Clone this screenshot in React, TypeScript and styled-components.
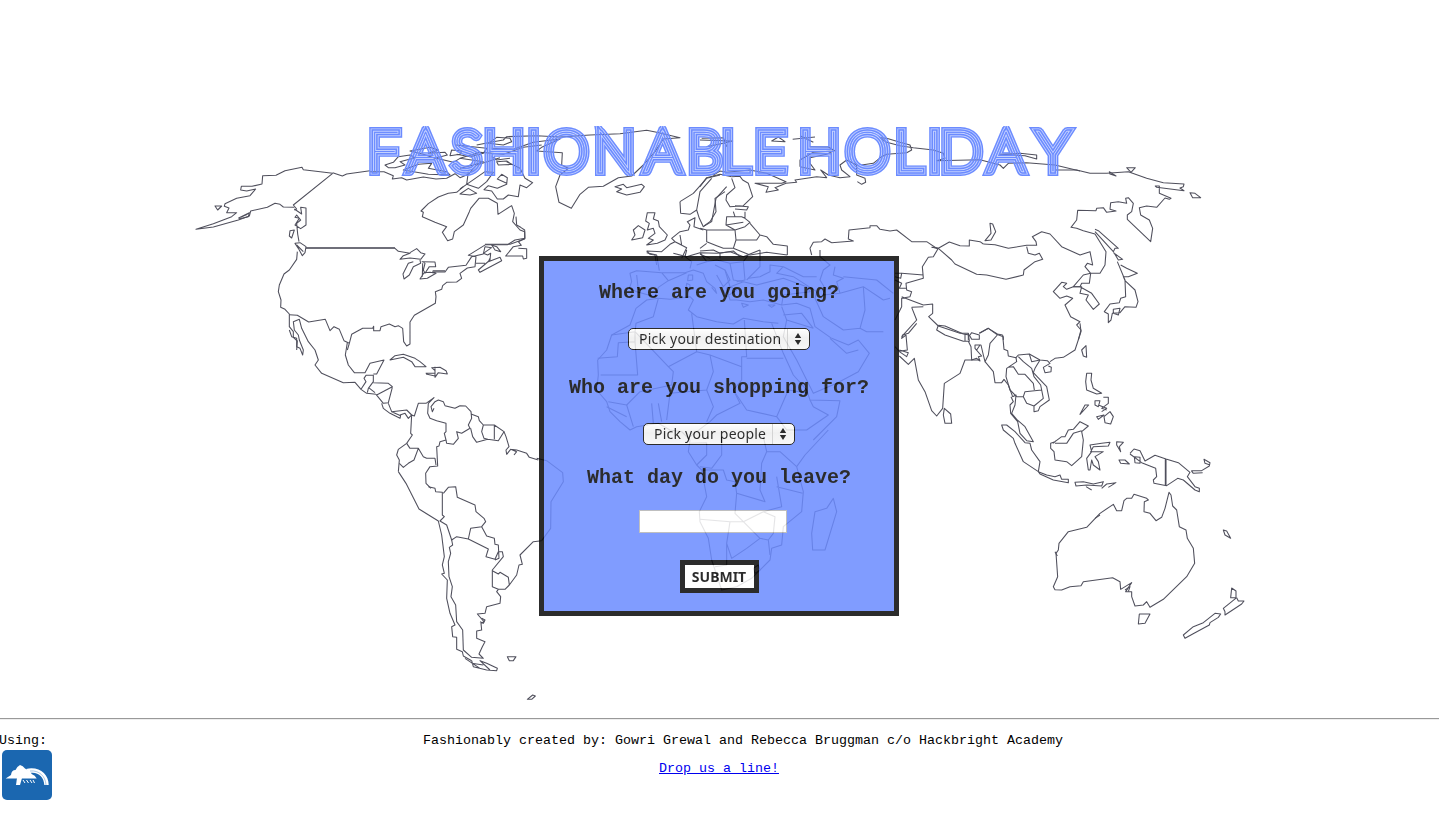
import React from "react";
import styled, { createGlobalStyle } from "styled-components";

const GlobalStyle = createGlobalStyle`
  body { margin: 0; background: #fff; }
`;

const mono = `"Courier New", "Liberation Mono", monospace`;
const ui = `"Lucida Grande", "Noto Sans", sans-serif`;

const Page = styled.div`
  height: 828px;
  display: flex;
  flex-direction: column;
  overflow: hidden;
  background: #fff;
  color: #000;
  font-family: ${mono};
`;

const Stage = styled.main`
  display: grid;
  height: 718px;
  grid-template-columns: 1439px;
  justify-content: center;
`;

const MapArt = styled.svg`
  grid-area: 1 / 1;
  fill: none;
  stroke: #333342;
  stroke-width: 3.2;
  stroke-linejoin: round;
  opacity: 0.86;
`;

const Content = styled.div`
  grid-area: 1 / 1;
  z-index: 1;
  display: flex;
  flex-direction: column;
  align-items: center;
`;

const Heading = styled.h1`
  margin: 116px 0 70px;
  height: 70px;
  width: 1439px;
  font-weight: 100;
  line-height: 0;
`;

const WordMark = styled.svg`
  display: block;
  font-family: Lato, sans-serif;
  font-size: 56px;
  font-weight: 100;
  text-anchor: middle;
  stroke-miterlimit: 6;
`;

const Form = styled.form`
  box-sizing: border-box;
  width: 360px;
  height: 360px;
  margin-right: 1px;
  border: 5px solid #080808;
  background: #6b8bff;
  opacity: 0.85;
  display: flex;
  flex-direction: column;
  align-items: center;
  color: #080808;
`;

const Question = styled.label<{ $top: number }>`
  margin-top: ${(p) => p.$top}px;
  height: 24px;
  font-size: 20px;
  font-weight: bold;
  line-height: 24px;
  white-space: pre;
`;

const Picker = styled.button<{ $width: number }>`
  box-sizing: border-box;
  margin-top: 23px;
  width: ${(p) => p.$width}px;
  height: 22px;
  padding: 0 0 0 10px;
  display: flex;
  align-items: center;
  border: 1px solid #080808;
  border-radius: 5px;
  background: linear-gradient(#fff, #eee 45%, #f7f7f7);
  color: #080808;
  font: 14px/20px ${ui};
  letter-spacing: 0.22px;
  white-space: nowrap;
`;

const PickerText = styled.span`
  flex: 1;
  text-align: left;
`;

const Arrows = styled.svg`
  width: 21px;
  height: 20px;
  border-left: 1px solid #ccc;
`;

const DateField = styled.input`
  box-sizing: border-box;
  width: 148px;
  height: 23px;
  margin: 20px 12px 0 0;
  border: 1px solid #b5b5b5;
  background: #fff;
  padding: 0;
`;

const Submit = styled.button`
  box-sizing: border-box;
  width: 79px;
  height: 33px;
  margin-top: 27px;
  padding: 0;
  border: 5px solid #080808;
  background: #fff;
  color: #080808;
  font: bold 14px/22px ${ui};
`;

const Footer = styled.footer`
  border-top: 1px solid #999;
  box-shadow: inset 0 1px #eee;
  height: 109px;
  display: grid;
  grid-template-columns: 60px 1fr 60px;
  font-size: 13.333px;
  line-height: 16px;
`;

const Using = styled.div`
  padding-top: 14px;
  margin-left: -1px;
`;

const Badge = styled.svg`
  display: block;
  width: 50px;
  height: 50px;
  margin: 1px 0 0 3px;
`;

const Credits = styled.div`
  display: flex;
  flex-direction: column;
  align-items: center;
  gap: 12px;
  padding-top: 14px;
`;

const Credit = styled.span`
  padding-left: 47px;
`;

const MailLink = styled.a`
  margin-right: 1px;
  color: #0000ee;
`;

type Region = { name: string; x: number; y: number; d: string[] };

/* Outlines are plotted three units to the pixel, region by region. */
const regions: Region[] = [
  {
    name: "north-america",
    x: 180,
    y: 110,
    d: [
      "M458 190L408 184L370 179L366 172L315 182L288 196L248 197L246 222L216 229L184 229L182 240L200 243L227 237L210 257L170 265L135 281L133 289L147 294L140 308L170 308L155 320L100 341L48 358L100 351L175 330L208 318L212 303L262 292L285 280L300 283L310 291L343 292",
      "M458 188L487 198L500 192L570 182",
      "M458 190L340 285L350 297L343 300",
      "M176 324L208 308L205 320L180 326ZM182 322L204 312M105 288L125 288L113 300Z",
      "M343 297L365 312L362 292L378 294L378 345L362 356L345 345L358 325L345 322L350 315L362 330L350 340L353 372L357 395M330 362L343 360L335 384L328 378Z",
      "M345 400L360 398L378 410L375 428L367 437L355 415ZM350 405L370 425",
      "M378 415L645 415L655 424L690 430L670 437L660 448L690 444L722 448L735 432L722 428L710 416L690 428",
      "M378 413L645 413M352 425L350 448L328 480L312 492L298 525L295 545L303 570L302 592L315 598L328 612L328 650L340 665L340 682L352 693L350 720",
      "M328 614L352 616L386 636L436 628L450 662L462 650L478 658L492 692L508 700L502 720M508 700L515 673L548 655L578 655L581 649L581 662L600 662L603 650L628 642L645 650L655 647L668 655L671 695L680 708L690 702L690 636L703 616L766 580L768 560L766 545L785 538L788 527L800 517L830 516L845 505L840 490L862 474L885 470L888 440L865 436L917 404L983 404L1005 390L1035 385L1034 360L1022 352L1010 345L1008 320",
      "M700 455L685 460L669 492L672 507L688 495L700 470L722 460L720 450M725 455L765 456L767 470L748 470L735 490L730 480L735 460L728 455M728 460L727 500M720 507L732 488L750 487L768 490L742 505ZM756 486L795 486L805 472L858 466L875 440L910 432L915 410M758 482L795 482",
      "M915 410L935 413L910 430L923 435L932 430L930 450L895 480L900 487L965 452L960 442L925 455L930 445M888 460L915 460M935 405L950 410L962 425L945 420ZM1035 385L1015 395L1024 406L1000 410L977 438L1028 438L1030 447L1040 445L1040 416L1015 415",
    ],
  },
  {
    name: "arctic-and-atlantic",
    x: 360,
    y: 115,
    d: [
      "M30 170L72 170L100 182L97 192L125 188L140 195L190 186L228 192L260 190L285 176L300 188L325 178L350 150L420 128",
      "M75 150L100 142L115 125L150 120L165 128L120 140L135 150L105 158L85 158ZM150 108L210 97L235 105L205 115L255 112L262 120L225 130L190 118ZM130 165L175 148L215 145L205 160L260 170L270 180L205 178Z",
      "M275 105L305 108L300 118L270 122ZM288 90L380 100L370 115L330 125L290 118M300 130L370 140L340 150L300 160M230 130L280 142L300 130L360 112L430 118L490 97L545 90",
      "M385 85L410 67L450 70L455 80L430 90ZM350 90L400 80L430 75L440 65L530 62L600 66L690 60L780 56L860 46L890 52L960 68L910 72L885 110L850 150L815 183L775 188L730 214L685 217L660 238L634 280L597 262L587 215L600 180L625 160L605 150L607 113L530 108L545 97L600 72L520 82L460 103L395 100",
      "M440 140L480 160L495 190L518 203L500 218L480 210L475 245L445 240L430 252L412 252L395 228L372 224L385 212L412 220L440 208L442 188L425 178L412 192L440 205M410 140L440 138L455 148L415 150ZM395 125L410 135L450 130",
      "M300 222L320 208L375 170L400 172L380 200L355 220L320 208M300 237L325 220L350 235L330 240ZM325 170L320 208",
      "M310 215L290 232L265 235L235 246L205 266L183 288L190 292L187 305L225 322L260 335L247 352L263 377L278 372L283 350L310 330L328 290L332 280L357 250L385 250L412 265L414 298L455 272L463 295L458 320L480 345L494 350L494 372L450 388L375 388",
      "M765 215L790 208L800 218L845 208L853 215L840 232L800 240L770 230L785 222Z",
      "M862 293L885 293L880 312L895 318L898 335L922 360L915 375L892 385L860 390L880 375L865 370L885 355L880 340L862 345L868 325L857 318ZM820 345L835 332L855 345L848 368L815 375L825 360Z",
      "M860 408L905 410L930 388L945 380L935 370L960 350L985 345L990 330L982 320L1005 308L1002 335L1030 345M945 380L965 390L960 360M945 380L980 398L965 430M860 408L870 418L885 420L890 450",
      "M960 260L1000 235L1040 190L1080 180M960 260L962 295L990 298L1010 285L1018 310L1030 335L1055 320L1068 250L1100 215M1010 285L1020 230L1055 190",
    ],
  },
  {
    name: "europe-and-siberia",
    x: 700,
    y: 115,
    d: [
      "M95 185L120 184L128 195L145 205L158 245L130 272L90 275L78 255L80 240L105 218L95 190M75 230L45 250L48 290L30 320L12 333M78 255L80 240M105 272L145 275L140 285L105 282",
      "M0 215L20 188L60 178L95 185M40 180L60 168L80 172L150 165L200 175L258 200L245 205L165 205L205 215L198 232L235 225L225 218L258 205L290 202L285 195L350 185L380 188L362 165L385 180L420 188L450 185L425 165L420 150L440 135L470 150L470 180L495 190L497 202L485 208L472 200",
      "M300 155L300 135L340 112L400 108L380 118L330 128L330 145L345 165L300 155M330 95L385 96L405 108M215 78L235 66L255 80ZM278 73L345 66M300 62L340 82M0 75L98 78L70 85L20 95M5 70L70 68L80 95",
      "M485 150L520 145L545 125L560 118L620 113L635 105L630 90L600 82L560 70L540 68L560 82L600 92L640 98L700 105L730 115L735 130L710 137L840 134L900 150L910 160L925 145L980 143L1065 150L1140 168M900 118L960 115L1010 120L1010 132L975 122Z",
      "M395 383L460 378L445 372L447 345L510 338L510 332L530 332L540 343L570 348L590 345L635 380L680 380L713 402M395 383L375 372L365 380L340 382L330 400L335 420",
      "M105 345L135 335L150 322L135 310L125 305L80 305L78 330L105 345L108 375L170 375L180 360L150 325M100 290L105 305M135 290L135 308M180 360L200 365L220 388L262 393L262 420M0 340L20 345L70 345L105 345M20 345L20 380L50 392L70 400L100 400L108 375M0 400L20 385M0 408L40 405L60 415L60 430M60 415L100 408L120 425M78 330L130 322M0 418L30 430M100 400L150 420L200 412L262 420",
    ],
  },
  {
    name: "east-asia",
    x: 880,
    y: 120,
    d: [
      "M525 150L590 150L630 160L680 160L745 155L800 175L850 188L912 192L910 200L900 204L912 212L830 202L826 198L838 198L838 220L873 235L868 238L855 234L830 262L800 258L778 263L782 285L808 300L818 325L812 365L742 298L742 285L755 275L760 250L745 233L737 235L740 250L715 245L692 248L690 268L708 273L680 277L670 263L650 265L648 272L593 271L590 300L573 322L590 325L610 332L645 342L678 395L675 435L660 460L632 460",
      "M740 143L766 143L753 157ZM688 155L708 168L690 162ZM930 218L945 220L962 233L938 233Z",
      "M310 372L345 374L385 385L440 376L470 376L468 365L457 350L485 335L510 342L545 380L600 405L630 395L638 435L622 430L615 440L632 460L628 490L605 490L600 500L580 500L610 465L632 460M440 380L445 400L465 405L478 400L488 418L465 425L432 450L430 465L378 478L320 465L290 463L225 432L215 420L175 385L155 382",
      "M155 382L175 385L208 366L240 377L268 378L268 360L300 365L310 372M330 310L338 312L347 335L333 360L315 362L333 340ZM175 385L160 410L145 412L127 440L130 475L78 490L80 510L95 515L90 530L65 535L65 560L45 600M65 460L130 465M65 530L90 540L130 555L158 552L158 580L146 590L175 618L240 640L265 640L265 660M95 562L110 600L65 650M95 562L130 560",
      "M645 328L655 332L715 385L705 385L700 395L645 335M700 398L728 418L715 420L702 398M712 425L735 480L737 530L722 535L718 548L690 552L673 575L685 582L685 608L693 600L697 580L720 578L735 560L768 562L774 545L765 510L735 482L730 470L745 470L772 460L740 445L722 435M700 568L720 565L715 585L700 580Z",
      "M580 500L605 500L600 520L625 525L618 540L640 568L658 552L635 520L600 500M580 500L560 508L550 500L560 490L545 487L520 515L540 535L560 528L578 535L555 555L572 590L600 605L590 615L603 630L595 660M298 640L325 625L350 643L370 650L370 660",
      "M45 460L65 460L62 475L45 470M45 480L65 490L58 505L80 505",
    ],
  },
  {
    name: "south-east-asia",
    x: 880,
    y: 280,
    d: [
      "M175 136L170 150L195 165L250 184L268 184L265 160M175 136L195 138L250 162L268 165L275 178L298 178L298 165L275 158L270 165M255 162L255 182M298 160L325 145L352 162L368 165M265 184L273 200L275 240L290 235L300 243L295 230L305 228L285 205L285 195L303 195L310 225L315 245L325 225L330 190L352 165M300 195L290 210",
      "M368 165L372 208L383 212L385 228L408 233L415 225L448 222L480 240L502 242L510 250L490 262L495 278L513 275L514 262L505 258M510 245L525 235L550 232L585 210L603 155L600 130M605 210L618 197L620 232L610 228Z",
      "M58 215L80 230L85 218L58 210M45 200L58 214L82 210L78 165L65 175L68 165L85 160L110 130M58 228L85 253L103 235L115 300L135 335L155 392L170 408L188 385L193 310L240 280L255 240L300 240M193 385L212 402L215 430L195 430L190 405Z",
      "M315 245L340 275L345 308L365 308L372 298L385 315L398 350L408 345L405 375L395 400L410 418L435 440L460 485L440 482L420 460L413 425L392 400L390 375L400 365L393 350",
      "M408 233L410 245L380 265L378 290L390 330L410 350L430 350L440 370L462 378L490 355L485 330L435 335L430 350M385 262L400 260L415 283L435 283L460 310L463 330M415 230L430 245L455 265L462 290L482 315L485 330M480 240L465 265L460 278L500 320L508 360L480 380L475 392L462 395L462 378M448 222L455 245L480 240",
      "M365 435L380 435L405 455L435 488L450 490L455 510L480 545L475 575L430 545L405 490L400 475L370 450ZM475 575L500 585L525 590L540 585L545 598L565 598L565 608L520 600L480 582Z",
      "M620 280L635 280L633 300L640 325L665 340L650 342L620 330L617 305ZM600 403L615 375L626 375ZM645 362L660 362L655 380L645 375ZM670 352L685 352L685 370L665 385L680 390M650 410L672 405L655 418ZM690 395L700 410L692 432L675 428L672 410ZM655 375L680 385L665 395",
      "M512 490L525 485L545 470L555 470L565 450L580 448L600 425L625 438L605 455L610 480L605 530L575 557L560 545L525 540L522 515L512 505ZM525 490L560 490L580 460L605 452M520 490L528 482",
      "M630 495L665 490L690 487L685 498L640 500L632 515L670 515L645 530L655 545L660 570L640 555L635 540L630 570L625 570L620 535L635 515ZM710 485L730 487L718 500L722 515L710 495ZM717 540L735 540L748 552L722 550Z",
      "M585 607L610 605L640 612L670 605L665 618L620 615L588 618ZM665 625L680 612L708 608L685 622M618 620L635 630",
    ],
  },
  {
    name: "oceania",
    x: 980,
    y: 430,
    d: [
      "M450 70L462 57L480 62L495 93L525 76L558 87L595 98L630 127L622 140L645 170L658 175L658 185L645 180L610 150L593 145L560 167L522 160L520 150L530 140L527 115L485 98L450 72M463 80L480 82L480 100L465 98ZM558 87L558 167M556 87L556 167M634 122L665 122L688 108L690 98L672 88L675 100L688 104M634 122L640 130L668 128",
      "M567 187L573 195L578 228L590 240L598 290L618 300L622 325L640 355L644 400L620 440L550 508L510 532L500 515L490 525L465 528L455 500L455 485L437 485L455 458L422 478L420 455L398 443L310 455L303 467L270 470L245 480L225 479L220 470L233 440L228 370L235 360L237 340L265 305L320 292L360 250L400 223L410 242L425 242L432 212L440 205L455 205L462 193L500 205L505 210L493 215L492 245L510 250L528 272L545 262L555 235Z",
      "M225 365L232 378M345 265L360 255M435 480L450 470L445 485M478 552L510 552L495 580L475 582ZM730 300L740 303L752 325L735 315Z",
      "M755 474L768 483L768 503L752 503ZM770 503L775 513L792 513L785 522L735 555L735 545L730 535L770 503M610 615L640 590L670 578L705 550L722 552L715 562L690 578L688 585L645 608L615 625Z",
    ],
  },
  {
    name: "central-america",
    x: 260,
    y: 300,
    d: [
      "M88 90L95 110L110 115L110 140L120 145L128 165L130 150L118 120L115 105L103 90L100 65L118 58L125 85L145 125L165 150L175 180L165 195L185 220L250 248L285 247L303 268L320 280L348 283",
      "M262 128L256 165L265 195L283 218L315 218L330 190L372 180L350 222L340 222M303 268L318 245L312 235L318 226L340 226L340 245L325 265L322 278M340 248L385 250L397 260L350 285M325 262L345 278M348 283L370 310L385 308L397 262M365 310L370 325L390 340L420 355L422 347L395 335L385 310M395 335L440 330L455 345L445 355L435 340L420 345",
      "M390 180L405 167L430 163L465 175L480 185L498 200L465 200L455 185L430 172ZM497 220L525 220L525 228L498 222M525 200L525 232L535 218L562 222L558 212L540 202L515 203L525 212",
      "M455 345L463 348L475 310L498 310L522 293L505 310L503 340L510 355L530 362L558 370L558 395L553 400L558 420L540 425L537 438L530 440L533 498L510 500L497 520L498 550L513 565M455 345L452 400L457 405L440 430L415 448L410 465L418 480L415 515",
      "M522 325L517 335L513 320L525 305L535 300L550 305L555 317L585 325L600 317L617 318L633 335L635 355L625 375L630 385L605 400L590 395L595 415L580 433L560 430L558 420M633 342L655 350L658 362L670 375L665 395L672 415L683 418L650 427L638 410L632 385M670 375L703 375L732 395L715 422L683 418M703 375L703 418M732 395L738 410L747 440L738 450L740 463L752 448L770 455L762 465M752 448L770 450L800 460L808 472L835 480",
      "M440 430L450 445L475 445L462 480L445 490L430 502L418 490M475 445L490 470L500 475L525 475L528 495",
    ],
  },
  {
    name: "south-america",
    x: 380,
    y: 450,
    d: [
      "M55 65L78 100L117 177L175 213L185 255L193 320L187 345L193 370L185 372L202 390L200 445L210 490L225 525L215 530L218 560L230 562L230 598L247 605L250 618L275 632M145 110L165 115L167 125L187 127L187 195L193 200L180 213L200 225L215 270L230 260L265 267L272 235L305 230L317 215L312 205L288 185L285 165L232 142L227 110L205 112L190 130",
      "M215 270L218 285L208 292L212 310L205 335L207 380L217 410L213 440L227 465L230 515L248 540L250 600L275 622L310 625L297 612L307 590L315 575L290 565L290 543L305 540L303 520L312 515L292 492L315 490L320 470L360 460L362 440L350 425L355 418L337 410L337 360L370 320L367 305L355 305L345 328L318 320L325 297L265 267M305 230L320 258L343 265L345 283L355 285L357 325L345 330",
      "M337 362L355 372L360 367L385 382L388 405L375 418L355 418M388 405L410 375L417 345L427 343L420 315L460 275L485 272M275 632L280 650L320 660L350 662L352 655L320 640L300 632L330 660M275 640L310 645M255 625L300 655M382 620L408 620L400 632H388Z",
      "M442 748L458 735L466 738L455 748ZM305 505L315 510L310 520L300 515",
      "M470 25L500 32L548 68L550 95L513 155L512 235L485 272",
    ],
  },
  {
    name: "mediterranean-and-africa",
    x: 530,
    y: 250,
    d: [
      "M300 70L320 62L395 68L415 92L385 112L375 140L320 125L298 115L305 95ZM320 75L325 120M395 68L465 68L490 60L520 70L530 95L555 115L560 130L545 112M415 92L470 68",
      "M350 8L380 15L388 62M470 0L465 20L485 35L480 55M430 10L470 20L510 8L560 10L600 5L640 20L690 0M510 8L530 35L500 45M530 35L560 30L600 40L640 35L655 15M560 75L580 110L600 90L585 60L555 45M475 75L488 75L488 90L473 92ZM470 100L480 105L480 118L468 115Z",
      "M585 60L600 110L620 120L590 140L580 120M600 40L610 90L640 95M640 35L645 90L620 95M690 0L690 50L650 90M600 150L590 115L640 95L680 105L760 85L830 110L840 125L760 135L755 165L700 150L660 155L620 150ZM635 160L655 165L640 172ZM715 165L735 165L725 172Z",
      "M655 85L690 80L720 65L720 45L760 50L740 70L790 80L860 125M870 0L870 20L900 45L880 60L870 90L885 115L880 135L930 130L920 95L940 85L910 75L915 50M940 80L1040 90L1090 130M760 50L820 80L860 80M930 130L1000 110L1060 150L1080 145M860 125L855 145L880 200L940 240L990 235L1010 245L1060 245M1000 110L1005 180L990 235M755 165L800 160L840 175L855 230L905 265",
      "M905 265L955 285L985 270L1018 310L985 365L920 400L850 430L800 330L760 260L770 210L850 235M985 300L950 310L900 265M770 210L755 170M760 195L815 190L850 235",
      "M385 145L350 150L318 175L300 225L245 255L230 300L203 330L205 375L200 420L230 455L240 485L270 515L300 540L320 530L385 520L420 540L455 545L480 570",
      "M385 145L420 148L480 140L490 150L475 180L500 200L560 215L610 222L640 205L700 215L745 220M385 145L370 200L318 220L315 245L245 255M315 245V275L265 278L262 320L203 325M315 275L323 375L212 375M315 245L415 350L500 305L485 190M500 305L540 315L635 350L635 320L650 320L643 210M650 325L760 325M415 350L430 365L425 405L330 425L290 465L235 455M540 315L550 365L530 420L420 430L410 510M635 350L635 390L610 420L630 460L560 495L540 515L480 560M725 220L760 310L790 375L830 420L840 450L930 452L920 500L850 570",
      "M840 450L850 470L895 495L830 540L770 540L740 500L775 420L835 430M610 420L650 480L740 500M530 420L550 470L530 515M365 460L370 520M385 460L395 515M290 465L310 530M230 470L290 500",
    ],
  },
  {
    name: "southern-africa",
    x: 530,
    y: 430,
    d: [
      "M480 30L475 65L500 105L515 120L530 200L508 245L510 275L535 325L545 390L575 480L620 470L665 445L720 390L725 355L755 345L760 290L815 245L820 185L800 110L825 75L895 0",
      "M480 40L530 38L530 75L500 105M575 20L575 75L545 115L510 110M700 20L710 65L750 65L800 110M710 65L695 100L690 180L705 215L620 190L615 155L590 150L580 120L515 120M620 190L615 250L640 275L600 275L510 268M740 170L818 190M740 140L755 230L700 245L640 275L690 325L715 330L720 375M600 275L590 340L605 385L650 355L690 325M590 340L590 405L555 410M700 245L735 260L730 310L715 330M670 415L685 405L690 420L675 430Z",
      "M910 205L920 245L885 360L848 360L845 310L855 245L890 235Z",
    ],
  },
];

const letterCentres =
  "383.5 425.5 466.5 504 533.5 566.5 614.5 662.5 704.5 735 770 792 819.5 867.5 908.5 934.5 961 1006 1053";

const WorldMap = () => (
  <MapArt width="1439" height="718" viewBox="0 0 1439 718" aria-hidden="true">
    {regions.map((r) => (
      <g key={r.name} transform={`translate(${r.x} ${r.y}) scale(.33333)`}>
        {r.d.map((d) => (
          <path key={d} d={d} />
        ))}
      </g>
    ))}
  </MapArt>
);

/* Concentric strokes round a hairline face give the five-line lettering. */
const Title = () => (
  <Heading>
    <WordMark width="1439" height="70" viewBox="0 116 1439 70">
      <defs>
        <mask id="stripes" maskUnits="userSpaceOnUse" x="0" y="126" width="1439" height="50">
          <use href="#word" fill="#fff" stroke="#fff" strokeWidth="10" />
          <use href="#word" fill="#666" stroke="#666" strokeWidth="7.2" />
          <use href="#word" fill="#fff" stroke="#fff" strokeWidth="5.4" />
          <use href="#word" fill="#666" stroke="#666" strokeWidth="2.4" />
        </mask>
      </defs>
      <rect y="120" width="1439" height="60" fill="#6b8bff" mask="url(#stripes)" />
      <g fill="#6b8bff" stroke="#6b8bff" strokeWidth="0.5">
        <text id="word" x={letterCentres} y="171">
          FASHIONABLE HOLIDAY
        </text>
      </g>
    </WordMark>
  </Heading>
);

const Select = ({ label, width }: { label: string; width: number }) => (
  <Picker type="button" $width={width}>
    <PickerText>{label}</PickerText>
    <Arrows viewBox="0 0 21 20">
      <path d="M10 4L13.2 9H6.8ZM10 16L6.8 11H13.2Z" fill="#080808" />
    </Arrows>
  </Picker>
);

export default function App() {
  return (
    <Page>
      <GlobalStyle />
      <Stage>
        <WorldMap />
        <Content>
          <Title />
          <Form>
            <Question $top={20}>Where are you going?</Question>
            <Select label="Pick your destination" width={182} />
            <Question $top={26}>Who are you shopping for?</Question>
            <Select label="Pick your people" width={152} />
            <Question $top={21}>What day do you leave?</Question>
            <DateField aria-label="Departure day" />
            <Submit type="button">SUBMIT</Submit>
          </Form>
        </Content>
      </Stage>
      <Footer>
        <Using>
          Using:
          <Badge viewBox="0 0 50 50">
            <rect width="50" height="50" rx="5" fill="#1b67b0" />
            <path d="M24 19C37 16 46.7 24 46.7 35H42.3C42 27 36 21.5 28 23Z" fill="#fff" />
            <path d="M28 21C37 20 43.5 26 44 35" fill="none" stroke="#8fb6dc" strokeWidth="0.8" />
            <path d="M14 35L15 28H20L18 35Z" fill="#fff" />
            <path
              d="M3.7 28.4L9 25Q9.500 20 13.500 20Q15 16.500 18 15Q21 15.500 23 18.500L27.300 21L30 24.300Q33 25 34.700 28.400Z"
              fill="#fff"
            />
            <path d="M21 30L23 33M24.500 30L26.500 33M28 30L30 33M31 30L32.500 33" stroke="#fff" strokeWidth="1" />
          </Badge>
        </Using>
        <Credits>
          <Credit>Fashionably created by: Gowri Grewal and Rebecca Bruggman c/o Hackbright Academy</Credit>
          <MailLink href="#">Drop us a line!</MailLink>
        </Credits>
      </Footer>
    </Page>
  );
}
